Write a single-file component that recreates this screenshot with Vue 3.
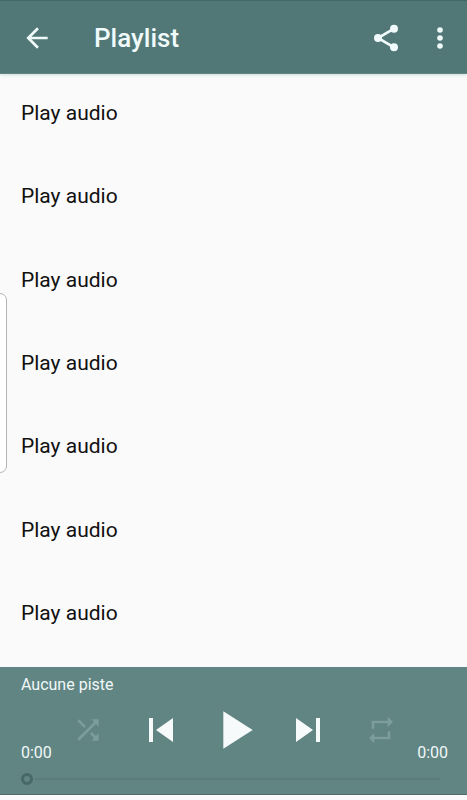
<script setup>
import { ref } from 'vue'

const tracks = ref(Array.from({ length: 7 }, (_, i) => ({ id: i, label: 'Play audio' })))
const position = ref(0)

const controls = [
  { name: 'Shuffle', kind: 'mode', path: 'M10.59 9.17 5.41 4 4 5.41l5.17 5.17 1.42-1.41zM14.5 4l2.04 2.04L4 18.59 5.41 20 17.96 7.46 20 9.5V4h-5.5zm.33 9.41-1.41 1.41 3.13 3.13L14.5 20H20v-5.5l-2.04 2.04-3.13-3.13z' },
  { name: 'Previous', kind: 'skip', path: 'M6 6h2v12H6zm3.5 6 8.5 6V6z' },
  { name: 'Play', kind: 'play', path: 'M8 5v14l11-7z' },
  { name: 'Next', kind: 'skip', path: 'M6 18l8.5-6L6 6v12zM16 6v12h2V6h-2z' },
  { name: 'Repeat', kind: 'mode', path: 'M7 7h10v3l4-4-4-4v3H5v6h2V7zm10 10H7v-3l-4 4 4 4v-3h12v-6h-2v4z' }
]
</script>

<template>
  <div class="screen">
    <header class="bar">
      <button class="icon-button" type="button" aria-label="Back">
        <svg viewBox="0 0 24 24"><path d="M20 11H7.83l5.59-5.59L12 4l-8 8 8 8 1.41-1.41L7.83 13H20v-2z" /></svg>
      </button>
      <h1 class="title">Playlist</h1>
      <button class="icon-button" type="button" aria-label="Share">
        <svg viewBox="0 0 24 24">
          <path class="link" d="M18 5 6 12l12 7" />
          <circle cx="18" cy="5" r="3" /><circle cx="6" cy="12" r="3" /><circle cx="18" cy="19" r="3" />
        </svg>
      </button>
      <button class="icon-button menu" type="button" aria-label="More options">
        <svg viewBox="0 0 24 24"><circle cx="12" cy="6" r="2.1" /><circle cx="12" cy="12" r="2.1" /><circle cx="12" cy="18" r="2.1" /></svg>
      </button>
    </header>

    <ul class="tracks">
      <li v-for="track in tracks" :key="track.id">
        <button class="track" type="button">{{ track.label }}</button>
      </li>
    </ul>

    <section class="player">
      <p class="now">Aucune piste</p>
      <div class="transport">
        <span class="time">0:00</span>
        <div class="controls">
          <button v-for="c in controls" :key="c.name" class="control" :class="c.kind" type="button" :aria-label="c.name">
            <svg viewBox="0 0 24 24"><path :d="c.path" /></svg>
          </button>
        </div>
        <span class="time">0:00</span>
      </div>
      <input v-model="position" class="seek" type="range" min="0" max="100" aria-label="Seek" />
    </section>
    <aside class="edge-handle"></aside>
  </div>
</template>

<style>
body {
  margin: 0;
  background: #fafafa;
}
</style>

<style scoped>
.screen {
  position: relative;
  box-sizing: border-box;
  min-height: 100vh;
  padding-bottom: 5px;
  display: flex;
  flex-direction: column;
  overflow: hidden;
  background: #fafafa;
  color: #111;
  font-family: Roboto, sans-serif;
}
button {
  margin: 0;
  padding: 0;
  border: 0;
  background: none;
  color: inherit;
  font: inherit;
  cursor: pointer;
}
svg {
  display: block;
  width: 100%;
  height: 100%;
  fill: currentColor;
}
.link {
  fill: none;
  stroke: currentColor;
  stroke-width: 2;
}
.bar {
  box-sizing: border-box;
  height: 74px;
  padding: 2px 11px 0 21px;
  display: flex;
  align-items: center;
  border-top: 1px solid #416866;
  border-bottom: 1px solid #64827f;
  background: #517877;
  box-shadow: 0 1px 3px #c9dcdc;
  color: #f0fafa;
}
.icon-button {
  width: 32px;
  height: 32px;
}
.menu {
  margin-left: 22px;
}
.title {
  flex: 1;
  margin: 0 0 0 41px;
  font-size: 26px;
  line-height: 32px;
  font-weight: 500;
}
.tracks {
  flex: 1;
  margin: 0;
  padding: 27px 0 42px;
  display: flex;
  flex-direction: column;
  justify-content: space-between;
  list-style: none;
}
.track {
  display: block;
  width: 100%;
  padding: 0 21px;
  text-align: left;
  font-size: 21px;
  line-height: 24px;
}
.player {
  padding: 8px 19px 1px 21px;
  border-bottom: 1px solid #4e6c6a;
  background: #618583;
  color: #f0f8f8;
}
.now {
  margin: 0;
  font-size: 16px;
  line-height: 20px;
}
.transport {
  display: flex;
  align-items: flex-end;
}
.time {
  padding-bottom: 2px;
  font-size: 16px;
  line-height: 20px;
}
.controls {
  flex: 1;
  height: 70px;
  display: grid;
  grid-template-columns: repeat(5, 1fr);
  place-items: center;
}
.control {
  width: 32px;
  height: 32px;
}
.skip {
  width: 48px;
  height: 48px;
}
.play {
  width: 64px;
  height: 64px;
}
.skip,
.play {
  color: #f7fafa;
}
.mode {
  color: #7b9d9b;
}
.seek {
  display: block;
  box-sizing: border-box;
  width: calc(100% - 8px);
  height: 28px;
  margin: 0;
  appearance: none;
  background: none;
}
.seek::-webkit-slider-runnable-track {
  height: 2px;
  background: #5a7c7a;
}
.seek::-webkit-slider-thumb {
  appearance: none;
  box-sizing: border-box;
  width: 12px;
  height: 12px;
  margin-top: -5px;
  border: 3px solid #466866;
  border-radius: 50%;
  background: #618583;
  box-shadow: 0 0 0 2px #618583;
}
.edge-handle {
  position: absolute;
  top: 293px;
  left: -8px;
  box-sizing: border-box;
  width: 15px;
  height: 180px;
  border: 1px solid #b5b5b5;
  border-radius: 7px;
  background: #fff;
}
</style>
